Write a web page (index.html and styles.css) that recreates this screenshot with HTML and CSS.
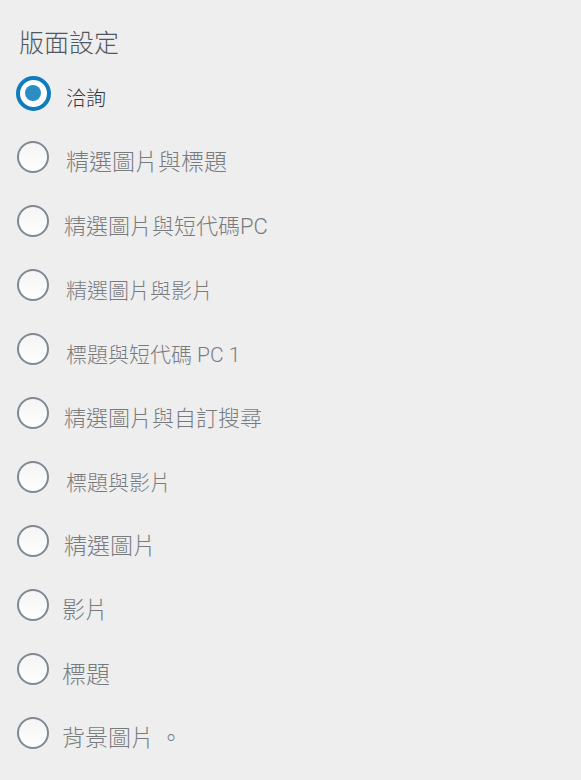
FILE: index.html
```html
<!DOCTYPE html>
<html lang="zh-TW">
<head>
  <meta charset="UTF-8">
  <meta name="viewport" content="width=device-width, initial-scale=1.0">
  <title>版面設定</title>
  <link rel="stylesheet" href="styles.css">
</head>
<body>
  <section class="panel">
    <h2 class="panel-title">版面設定</h2>

    <div class="options">
      <label class="option checked">
        <input type="radio" name="layout" class="radio" checked>
        <span class="option-text">洽詢</span>
      </label>
      <label class="option">
        <input type="radio" name="layout" class="radio">
        <span class="option-text text-lg">精選圖片與標題</span>
      </label>
      <label class="option">
        <input type="radio" name="layout" class="radio">
        <span class="option-text shift-left">精選圖片與短代碼PC</span>
      </label>
      <label class="option">
        <input type="radio" name="layout" class="radio">
        <span class="option-text text-sm">精選圖片與影片</span>
      </label>
      <label class="option">
        <input type="radio" name="layout" class="radio">
        <span class="option-text text-sm">標題與短代碼 PC 1</span>
      </label>
      <label class="option">
        <input type="radio" name="layout" class="radio">
        <span class="option-text shift-left">精選圖片與自訂搜尋</span>
      </label>
      <label class="option">
        <input type="radio" name="layout" class="radio">
        <span class="option-text text-sm">標題與影片</span>
      </label>
      <label class="option">
        <input type="radio" name="layout" class="radio">
        <span class="option-text text-lg shift-left">精選圖片</span>
      </label>
      <label class="option">
        <input type="radio" name="layout" class="radio">
        <span class="option-text text-lg shift-more">影片</span>
      </label>
      <label class="option">
        <input type="radio" name="layout" class="radio">
        <span class="option-text text-xl shift-more">標題</span>
      </label>
      <label class="option">
        <input type="radio" name="layout" class="radio">
        <span class="option-text text-lg shift-more">背景圖片 。</span>
      </label>
    </div>
  </section>
</body>
</html>
```

FILE: styles.css
```css
body {
  margin: 0;
  background-color: #eeeeee;
  font-family: Roboto, "Noto Sans CJK TC", sans-serif;
}

.panel {
  padding: 27px 0 0 17px;
}

.panel-title {
  margin: 0;
  padding-left: 2px;
  font-size: 25px;
  line-height: 34px;
  font-weight: 300;
  color: #50575e;
}

.options {
  display: flex;
  flex-direction: column;
}

.option {
  display: flex;
  align-items: center;
  height: 64px;
  cursor: pointer;
}

.radio {
  appearance: none;
  -webkit-appearance: none;
  box-sizing: border-box;
  width: 32px;
  height: 32px;
  margin: 0;
  border: 2px solid #7e8993;
  border-radius: 50%;
  background: linear-gradient(#f4f4f4, #ffffff);
  display: flex;
  align-items: center;
  justify-content: center;
  flex-shrink: 0;
}

.radio:checked {
  width: 35px;
  height: 35px;
  margin: 0 -1.5px 0 -1.5px;
  border: 4px solid #0f7cbd;
  background: #ffffff;
}

.radio:checked::before {
  content: "";
  width: 16px;
  height: 16px;
  border-radius: 50%;
  background-color: #2a8ec4;
}

.option-text {
  margin-left: 17px;
  margin-top: 12px;
  font-size: 22px;
  line-height: 32px;
  font-weight: 300;
  color: #787b7e;
}

.option.checked .option-text {
  font-size: 20px;
  color: #32373c;
}

/* the labels don't all render at the same size */
.text-sm {
  font-size: 21px;
}

.text-lg {
  font-size: 23px;
}

.text-xl {
  font-size: 24px;
}

.shift-left {
  margin-left: 15px;
}

.shift-more {
  margin-left: 13px;
}
```
